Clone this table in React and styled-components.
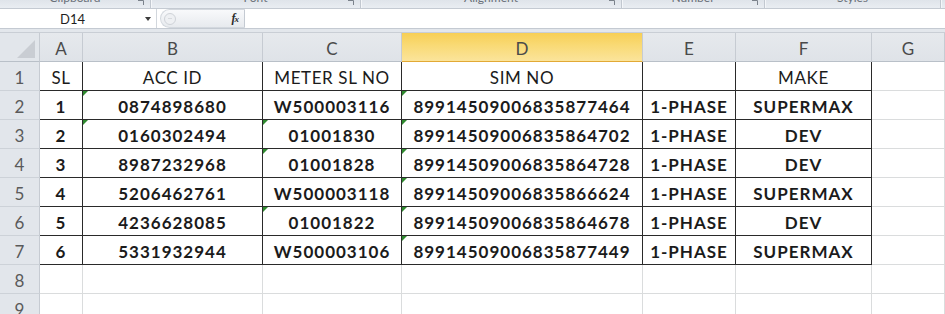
import { Fragment } from "react";
import styled, { createGlobalStyle } from "styled-components";

const GlobalStyle = createGlobalStyle`
  html, body {
    margin: 0;
    padding: 0;
    background: #ffffff;
    overflow: hidden;
  }
  body {
    font-family: Lato, "Open Sans", sans-serif;
  }
`;

// ribbon strip (only the bottom of the group labels shows)
const Ribbon = styled.div`
  height: 9px;
  display: flex;
  overflow: hidden;
  background: linear-gradient(#dfe4ea, #e9edf2);
  border-bottom: 1px solid #c4cad2;
  box-sizing: border-box;
`;

const RibbonGroup = styled.div`
  position: relative;
  width: ${(p) => p.w}px;
  flex-shrink: 0;
  border-right: 1px solid #c2c8d0;
  box-shadow: 1px 0 0 #f4f6f9;
  display: flex;
  justify-content: center;
`;

const RibbonLabel = styled.span`
  font-size: 12px;
  line-height: 12px;
  margin-top: -8px;
  color: #6a7079;
`;

const Launcher = styled.svg`
  position: absolute;
  right: 6px;
  top: 0;
`;

// formula bar
const FormulaBar = styled.div`
  height: 20px;
  display: flex;
  background: #ffffff;
  border-bottom: 1px solid #c4cad2;
  box-sizing: border-box;
`;

const NameBox = styled.div`
  width: 157px;
  display: flex;
  align-items: center;
  box-sizing: border-box;
  border-right: 1px solid #d2d7dd;
  padding-left: 60px;
  position: relative;
  font-size: 13px;
  color: #1e1e1e;
`;

const DropArrow = styled.span`
  position: absolute;
  right: 5px;
  top: 8px;
  border-left: 3px solid transparent;
  border-right: 3px solid transparent;
  border-top: 4px solid #3c3c3c;
`;

const FxZone = styled.div`
  width: 85px;
  margin-left: 3px;
  display: flex;
  align-items: center;
  justify-content: space-between;
  padding: 0 6px 0 2px;
  box-sizing: border-box;
  border: 1px solid #d3d8de;
  border-right: 1px solid #c4cad2;
  border-radius: 10px 0 0 10px;
  background: linear-gradient(#f8f9fb, #e7eaee);
`;

const FxLabel = styled.span`
  font-family: "Liberation Serif", serif;
  font-style: italic;
  font-weight: bold;
  font-size: 12px;
  color: #2b2b2b;
  letter-spacing: -1px;
  & small {
    font-size: 9px;
  }
`;

const FormulaInput = styled.div`
  flex: 1;
  background: #ffffff;
`;

const BarGap = styled.div`
  height: 4px;
  background: #e3e7ec;
  border-bottom: 1px solid #c9ced5;
  box-sizing: border-box;
`;

// sheet
const Sheet = styled.div`
  display: grid;
  grid-template-columns: 40px 43px 180px 139px 241px 93px 136px 1fr;
  grid-auto-rows: 29px;
`;

const Corner = styled.div`
  background: #e2e6eb;
  border-right: 1px solid #c6cbd2;
  border-bottom: 1px solid #b9c0c8;
  box-sizing: border-box;
  display: flex;
  align-items: flex-end;
  justify-content: flex-end;
  padding: 0 4px 3px 0;
`;

const CornerMark = styled.span`
  width: 0;
  height: 0;
  border-left: 18px solid transparent;
  border-bottom: 18px solid #c9cdd3;
`;

const ColHeader = styled.div`
  background: ${(p) =>
    p.selected
      ? "linear-gradient(#f7cf55, #f9da76 45%, #fbe49b)"
      : "linear-gradient(#e6e9ed, #dfe3e8)"};
  border-right: 1px solid #c6cbd2;
  border-bottom: 1px solid ${(p) => (p.selected ? "#e2a935" : "#b9c0c8")};
  box-sizing: border-box;
  display: flex;
  align-items: center;
  justify-content: center;
  font-size: 17px;
  color: #4a4a4a;
  padding-top: 2px;
`;

const RowHeader = styled.div`
  background: #e2e6eb;
  border-right: 1px solid #c6cbd2;
  border-bottom: 1px solid #cdd2d8;
  box-sizing: border-box;
  display: flex;
  align-items: center;
  justify-content: center;
  font-size: 17px;
  color: #5a5a5a;
  padding-top: 2px;
`;

const Cell = styled.div`
  position: relative;
  box-sizing: border-box;
  border-right: 1px solid ${(p) => (p.framed ? "#2a2a2a" : "#dadcdd")};
  border-bottom: 1px solid ${(p) => (p.framed ? "#2a2a2a" : "#dadcdd")};
  display: flex;
  align-items: center;
  justify-content: center;
  white-space: nowrap;
  font-size: 17px;
  letter-spacing: ${(p) => (p.bold ? "1px" : "0.6px")};
  font-weight: ${(p) => (p.bold ? 700 : 400)};
  color: #1b1b1b;
  padding-top: 3px;

  &::before {
    content: "";
    display: ${(p) => (p.flag ? "block" : "none")};
    position: absolute;
    left: 0;
    top: 0;
    border-top: 5px solid #2f8a2f;
    border-right: 5px solid transparent;
  }
`;

const groups = [
  { w: 150, label: "Clipboard" },
  { w: 209, label: "Font" },
  { w: 260, label: "Alignment" },
  { w: 142, label: "Number" },
  { w: 175, label: "Styles" },
];

const columns = ["A", "B", "C", "D", "E", "F", "G"];

const rows = [
  ["SL", "ACC ID", "METER SL NO", "SIM NO", "", "MAKE"],
  ["1", "0874898680", "W500003116", "89914509006835877464", "1-PHASE", "SUPERMAX"],
  ["2", "0160302494", "01001830", "89914509006835864702", "1-PHASE", "DEV"],
  ["3", "8987232968", "01001828", "89914509006835864728", "1-PHASE", "DEV"],
  ["4", "5206462761", "W500003118", "89914509006835866624", "1-PHASE", "SUPERMAX"],
  ["5", "4236628085", "01001822", "89914509006835864678", "1-PHASE", "DEV"],
  ["6", "5331932944", "W500003106", "89914509006835877449", "1-PHASE", "SUPERMAX"],
  ["", "", "", "", "", ""],
  ["", "", "", "", "", ""],
];

// cells showing the green "number stored as text" mark
const flagged = ["B2", "B3", "C3", "C4", "C6", "D2", "D3", "D4", "D5", "D6", "D7"];

function App() {
  return (
    <>
      <GlobalStyle />
      <Ribbon>
        {groups.map((g) => (
          <RibbonGroup key={g.label} w={g.w}>
            <RibbonLabel>{g.label}</RibbonLabel>
            {g.label !== "Styles" && (
              <Launcher width="6" height="5" viewBox="0 0 6 5">
                <path d="M0 0.5H5.5V5" stroke="#7b828b" fill="none" />
              </Launcher>
            )}
          </RibbonGroup>
        ))}
      </Ribbon>

      <FormulaBar>
        <NameBox>
          D14
          <DropArrow />
        </NameBox>
        <FxZone>
          <svg width="14" height="14" viewBox="0 0 14 14">
            <circle cx="7" cy="7" r="5.5" stroke="#cfd3d8" fill="#eef0f3" />
            <path d="M5 6.5h4" stroke="#d6d9dd" />
          </svg>
          <FxLabel>
            f<small>x</small>
          </FxLabel>
        </FxZone>
        <FormulaInput />
      </FormulaBar>
      <BarGap />

      <Sheet>
        <Corner>
          <CornerMark />
        </Corner>
        {columns.map((c) => (
          <ColHeader key={c} selected={c === "D"}>
            {c}
          </ColHeader>
        ))}
        {rows.map((row, r) => (
          <Fragment key={r}>
            <RowHeader>{r + 1}</RowHeader>
            {row.map((val, c) => {
              const ref = columns[c] + (r + 1);
              return (
                <Cell
                  key={ref}
                  framed={r < 7}
                  bold={r > 0 && r < 7}
                  flag={flagged.includes(ref)}
                >
                  {val}
                </Cell>
              );
            })}
            <Cell />
          </Fragment>
        ))}
      </Sheet>
    </>
  );
}

export default App;
